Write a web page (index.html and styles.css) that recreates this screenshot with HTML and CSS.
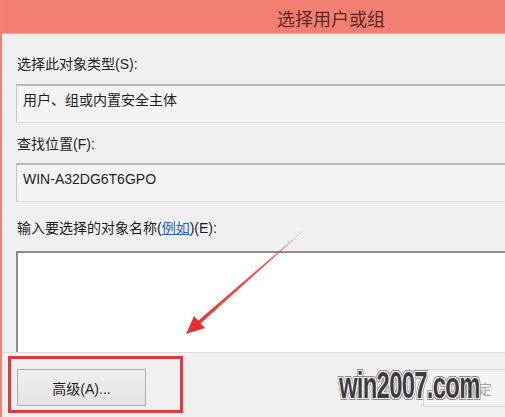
FILE: index.html
```html
<!DOCTYPE html>
<html lang="zh-CN">
<head>
<meta charset="utf-8">
<title>选择用户或组</title>
<link rel="stylesheet" href="styles.css">
</head>
<body>
<div class="window">
  <div class="titlebar"><span class="title">选择用户或组</span></div>
  <div class="content">
    <div class="label first">选择此对象类型(S):</div>
    <div class="field">用户、组或内置安全主体</div>
    <div class="label">查找位置(F):</div>
    <div class="field">WIN-A32DG6T6GPO</div>
    <div class="label third">输入要选择的对象名称(<a class="link" href="#">例如</a>)(E):</div>
    <div class="textarea"></div>
  </div>
  <div class="footer">
    <button class="btn">高级(A)...</button>
    <button class="btn ok">确定</button>
  </div>
  <div class="highlight"></div>
  <svg class="arrow" width="505" height="417" viewBox="0 0 505 417">
    <defs>
      <linearGradient id="fade" x1="304" y1="230" x2="187" y2="333" gradientUnits="userSpaceOnUse">
        <stop offset="0" stop-color="#e83a3a" stop-opacity="0.15"/>
        <stop offset="0.3" stop-color="#e83a3a" stop-opacity="0.85"/>
        <stop offset="1" stop-color="#e83030" stop-opacity="1"/>
      </linearGradient>
    </defs>
    <polygon points="304.2,230.2 303.8,229.8 197.8,321.1 200.2,323.7" fill="url(#fade)"/>
    <polygon points="186,334 194,316 205,328" fill="#e83030"/>
  </svg>
  <div class="watermark">win2007.com</div>
</div>
</body>
</html>
```
FILE: styles.css
```css
html, body {
  margin: 0;
  padding: 0;
}
body {
  width: 505px;
  height: 417px;
  overflow: hidden;
  background: #f0f0f0;
  font-family: "Liberation Sans", "Noto Sans CJK SC", sans-serif;
  font-size: 14px;
  color: #1e1e1e;
}
.window {
  position: relative;
  width: 503px;
  height: 417px;
  border-left: 2px solid #ee8377;
  background: #f0f0f0;
  overflow: hidden;
}
.titlebar {
  height: 33px;
  background: #f27f72;
  border-bottom: 1px solid #f6b3aa;
  display: flex;
  align-items: center;
  padding-left: 275px;
}
.title {
  font-family: "Noto Sans CJK SC", sans-serif;
  font-size: 18px;
  line-height: 22px;
  color: #5f2822;
  margin-top: 2px;
}
.content {
  padding: 0 0 0 14px;
  display: flex;
  flex-direction: column;
}
.label {
  line-height: 20px;
  height: 20px;
  margin: 11px 0 9px 1px;
  white-space: nowrap;
}
.label.first {
  margin-top: 20px;
  margin-bottom: 10px;
}
.label.third {
  margin-top: 16px;
  margin-bottom: 13px;
}
.link {
  color: #1d63c4;
  text-decoration: underline;
}
.field {
  height: 20px;
  line-height: 20px;
  padding: 4px 6px 12px 6px;
  background: #f4f4f4;
  border-top: 2px solid #b9b9b9;
  border-left: 1px solid #c4c4c4;
  border-bottom: 1px solid #dedede;
  margin-right: -10px;
  white-space: nowrap;
}
.textarea {
  height: 99px;
  background: #ffffff;
  border-top: 2px solid #8c8c8c;
  border-left: 2px solid #8c8c8c;
  margin-right: -10px;
}
.footer {
  border-top: 1px solid #dcdcdc;
  display: flex;
  align-items: flex-start;
  padding: 16px 0 0 15px;
  gap: 277px;
}
.btn {
  width: 129px;
  height: 37px;
  flex: none;
  font-family: "Liberation Sans", "Noto Sans CJK SC", sans-serif;
  font-size: 14px;
  color: #1e1e1e;
  background: linear-gradient(#f0f0f0, #e3e3e3);
  border: 1px solid #adadad;
  border-radius: 1px;
  padding: 0;
}
.btn.ok {
  width: 110px;
  height: 38px;
  background: #f4f4f4;
  border-color: #d6d6d6;
  color: #a8a8a8;
}
.highlight {
  position: absolute;
  left: 6px;
  top: 356px;
  width: 169px;
  height: 51px;
  border: 3px solid #e2393a;
}
.arrow {
  position: absolute;
  left: -2px;
  top: 0;
  pointer-events: none;
}
.watermark {
  position: absolute;
  left: 337px;
  top: 366px;
  font-family: "Liberation Sans", sans-serif;
  font-weight: bold;
  font-size: 36px;
  line-height: 40px;
  letter-spacing: -1px;
  white-space: nowrap;
  transform: scaleX(0.66);
  transform-origin: 0 50%;
  color: #3d3d3d;
  text-shadow:
    1px 0 0 #fff, -1px 0 0 #fff, 0 1px 0 #fff, 0 -1px 0 #fff,
    1px 1px 0 #fff, -1px -1px 0 #fff, 1px -1px 0 #fff, -1px 1px 0 #fff,
    2px 0 0 #8a8a8a, -2px 0 0 #8a8a8a, 0 2px 0 #8a8a8a, 0 -2px 0 #8a8a8a,
    2px 2px 0 #8a8a8a, -2px -2px 0 #8a8a8a, 2px -2px 0 #8a8a8a, -2px 2px 0 #8a8a8a;
}
```
